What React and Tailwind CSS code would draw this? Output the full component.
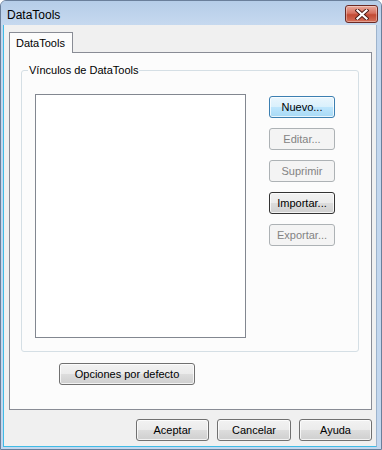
import React from "react";

const FONT = { fontFamily: '"Liberation Sans", Arial, sans-serif' };

function Btn({ children, variant = "normal", className = "" }) {
  const v = {
    normal:
      "border-[#707070] bg-[linear-gradient(#f2f2f2,#ebebeb_50%,#dddddd_50%,#cfcfcf)] text-black shadow-[inset_0_0_0_1px_rgba(255,255,255,0.75)]",
    hover:
      "border-[#3c7fb1] bg-[linear-gradient(#eaf6fd,#d9f0fc_50%,#bee6fd_50%,#a7d9f5)] text-black shadow-[inset_0_0_0_1px_rgba(255,255,255,0.75)]",
    disabled: "border-[#adb2b5] bg-[#f4f4f4] text-[#838383]",
    def:
      "border-[#333333] bg-[linear-gradient(#f2f2f2,#ebebeb_50%,#dddddd_50%,#cfcfcf)] text-black shadow-[inset_0_0_0_1px_rgba(255,255,255,0.75)]",
  }[variant];
  return (
    <div
      className={`h-[22px] flex items-center justify-center rounded-[3px] border text-[11px] leading-none ${v} ${className}`}
    >
      {children}
    </div>
  );
}

export default function App() {
  return (
    <div
      style={FONT}
      className="w-[382px] h-[450px] flex flex-col bg-[#c3d7ee] border border-[#6a7f9b] rounded-t-[6px] overflow-hidden"
    >
      {/* Title bar */}
      <div className="h-[24px] shrink-0 flex items-start justify-between bg-[linear-gradient(#b5cde8,#c6d9ef)] pl-[6px] pr-[3px]">
        <div className="text-[12px] leading-[14px] mt-[7px] text-black">DataTools</div>
        <div className="mt-[4px] w-[33px] h-[18px] rounded-[3px] border border-[#6b2a25] bg-[linear-gradient(#e9a99c,#d7715f_45%,#c24a33_55%,#d5705a)] flex items-center justify-center shadow-[inset_0_0_0_1px_rgba(255,255,255,0.35)]">
          <svg width="14" height="11" viewBox="0 0 14 11">
            <path d="M2.5 1.5 L11.5 9.5 M11.5 1.5 L2.5 9.5" stroke="#4a1b16" strokeWidth="4" strokeLinecap="square" />
            <path d="M2.5 1.5 L11.5 9.5 M11.5 1.5 L2.5 9.5" stroke="#ffffff" strokeWidth="2.2" strokeLinecap="square" />
          </svg>
        </div>
      </div>

      {/* Content */}
      <div className="flex-1 ml-[2px] mr-[4px] mb-[2px] bg-[#f0f0f0] border-l border-b border-[#3fbbe6] border-r-[#9db3cc] border-r flex flex-col">
        {/* Tabs */}
        <div className="pl-[5px] pt-[7px] flex">
          <div className="relative z-10 -mb-px h-[21px] w-[64px] border border-b-0 border-[#898c95] bg-[#fcfcfc] text-[11px] leading-none flex items-center pl-[6px] pt-[1px]">
            DataTools
          </div>
        </div>
        <div className="ml-[5px] w-[363px] h-[358px] border border-[#898c95] bg-[#fcfcfc] flex flex-col">
          {/* Group box */}
          <div className="mt-[17px] ml-[11px] mr-[12px] border border-[#d5dfe5] rounded-[3px] pl-[13px] pb-[13px] flex flex-col">
            <div className="-mt-[8px] -ml-[7px] px-[1px] w-fit bg-[#fcfcfc] text-[11px] leading-[14px] text-black">
              Vínculos de DataTools
            </div>
            <div className="mt-[17px] flex">
              <div className="w-[211px] h-[244px] border border-[#828790] bg-white" />
              <div className="ml-[23px] mt-[2px] w-[66px] flex flex-col gap-[10px]">
                <Btn variant="hover">Nuevo...</Btn>
                <Btn variant="disabled">Editar...</Btn>
                <Btn variant="disabled">Suprimir</Btn>
                <Btn variant="def">Importar...</Btn>
                <Btn variant="disabled">Exportar...</Btn>
              </div>
            </div>
          </div>
          <div className="mt-[11px] ml-[49px]">
            <Btn className="w-[136px]">Opciones por defecto</Btn>
          </div>
        </div>
        {/* Bottom buttons */}
        <div className="mt-[9px] flex justify-end gap-[8px] pr-[4px]">
          <Btn className="w-[73px]">Aceptar</Btn>
          <Btn className="w-[74px]">Cancelar</Btn>
          <Btn className="w-[73px]">Ayuda</Btn>
        </div>
      </div>
    </div>
  );
}
